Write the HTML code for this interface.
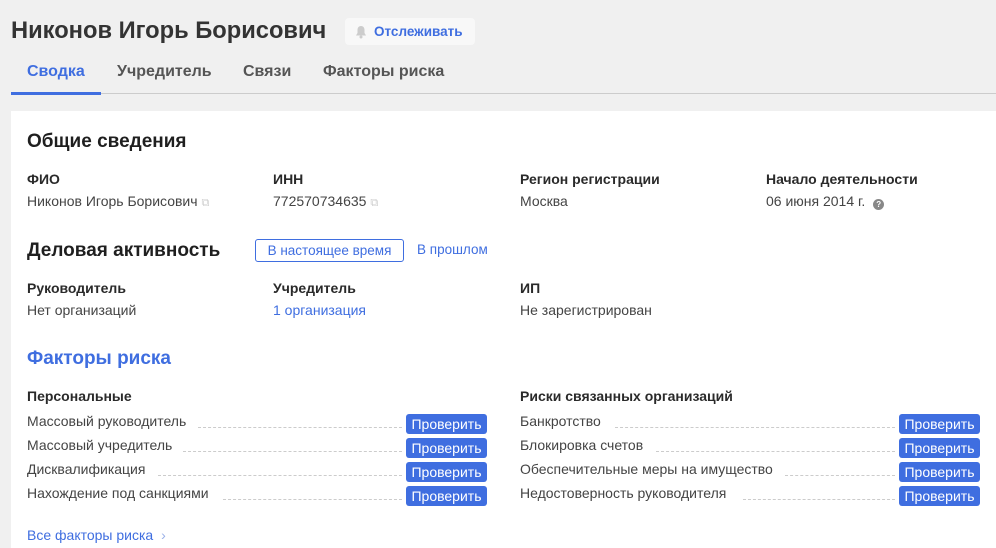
<!DOCTYPE html>
<html><head><meta charset="utf-8"><style>
*{margin:0;padding:0;box-sizing:border-box}
body{width:996px;height:548px;background:#f0f0f0;font-family:"Liberation Sans",sans-serif;color:#333;position:relative;overflow:hidden}
.a{position:absolute;white-space:nowrap}
h1{position:absolute;left:11px;top:18px;font-size:23.7px;font-weight:bold;color:#333}
.track{position:absolute;left:345px;top:18px;width:130px;height:27px;background:#f8f8f8;border-radius:4px;color:#3f6ee0;font-weight:bold;font-size:13.5px;line-height:27px;padding-left:29px}
.tab{position:absolute;top:63px;font-size:16px;font-weight:bold;color:#555}
.card{position:absolute;left:11px;top:111px;width:985px;height:437px;background:#fff}
.h2{font-size:19px;font-weight:bold;color:#1f1f1f}
.lb{font-size:14px;font-weight:bold;color:#2a2a2a}
.v{font-size:14px;color:#444}
.btn{position:absolute;width:81px;height:20px;background:#3f6ee0;color:#fff;font-size:14px;line-height:20px;text-align:center;border-radius:3px}
.dot{position:absolute;height:1px;border-top:1px dashed #ccc}
.blue{color:#3f6ee0}
</style></head><body>
<h1>Никонов Игорь Борисович</h1>
<div class="track"><svg style="position:absolute;left:10px;top:7px" width="12" height="14" viewBox="0 0 12 14"><path d="M6 1C3.5 1 2.5 3 2.5 5v3L1 10.5h10L9.5 8V5C9.5 3 8.5 1 6 1z" fill="#ccc"/><circle cx="6" cy="12" r="1.5" fill="#ccc"/></svg>Отслеживать</div>
<div class="tab" style="left:27px;color:#3f6ee0">Сводка</div>
<div class="tab" style="left:117px">Учредитель</div>
<div class="tab" style="left:243px">Связи</div>
<div class="tab" style="left:323px">Факторы риска</div>
<div class="a" style="left:11px;top:93px;width:985px;height:1px;background:#ccc"></div>
<div class="a" style="left:11px;top:92px;width:90px;height:3px;background:#3f6ee0"></div>
<div class="card"></div>
<div class="a h2" style="left:27px;top:131px">Общие сведения</div>
<div class="a lb" style="left:27px;top:171px">ФИО</div>
<div class="a lb" style="left:273px;top:171px">ИНН</div>
<div class="a lb" style="left:520px;top:171px">Регион регистрации</div>
<div class="a lb" style="left:766px;top:171px">Начало деятельности</div>
<div class="a v" style="left:27px;top:193px">Никонов Игорь Борисович <span style="color:#ccc;font-size:11px">⧉</span></div>
<div class="a v" style="left:273px;top:193px">772570734635 <span style="color:#ccc;font-size:11px">⧉</span></div>
<div class="a v" style="left:520px;top:193px">Москва</div>
<div class="a v" style="left:766px;top:193px">06 июня 2014 г. <span style="display:inline-block;width:11px;height:11px;border-radius:50%;background:#888;color:#fff;font-size:8px;line-height:11px;text-align:center;font-weight:bold;vertical-align:-1px;margin-left:4px">?</span></div>
<div class="a h2" style="left:27px;top:240px">Деловая активность</div>
<div class="a" style="left:255px;top:239px;width:149px;height:23px;border:1px solid #3f6ee0;border-radius:3px;color:#3f6ee0;font-size:13.5px;line-height:21px;text-align:center">В настоящее время</div>
<div class="a blue" style="left:417px;top:242px;font-size:13.5px">В прошлом</div>
<div class="a lb" style="left:27px;top:280px">Руководитель</div>
<div class="a lb" style="left:273px;top:280px">Учредитель</div>
<div class="a lb" style="left:520px;top:280px">ИП</div>
<div class="a v" style="left:27px;top:302px">Нет организаций</div>
<div class="a v blue" style="left:273px;top:302px">1 организация</div>
<div class="a v" style="left:520px;top:302px">Не зарегистрирован</div>
<div class="a h2 blue" style="left:27px;top:348px">Факторы риска</div>
<div class="a lb" style="left:27px;top:388px">Персональные</div>
<div class="a lb" style="left:520px;top:388px">Риски связанных организаций</div>

<div class="a v" style="left:27px;top:413px">Массовый руководитель</div><div class="dot" style="left:198px;top:427px;width:204px"></div><div class="btn" style="left:406px;top:414px">Проверить</div>
<div class="a v" style="left:27px;top:437px">Массовый учредитель</div><div class="dot" style="left:183px;top:451px;width:219px"></div><div class="btn" style="left:406px;top:438px">Проверить</div>
<div class="a v" style="left:27px;top:461px">Дисквалификация</div><div class="dot" style="left:158px;top:475px;width:244px"></div><div class="btn" style="left:406px;top:462px">Проверить</div>
<div class="a v" style="left:27px;top:485px">Нахождение под санкциями</div><div class="dot" style="left:223px;top:499px;width:179px"></div><div class="btn" style="left:406px;top:486px">Проверить</div>

<div class="a v" style="left:520px;top:413px">Банкротство</div><div class="dot" style="left:615px;top:427px;width:280px"></div><div class="btn" style="left:899px;top:414px">Проверить</div>
<div class="a v" style="left:520px;top:437px">Блокировка счетов</div><div class="dot" style="left:656px;top:451px;width:239px"></div><div class="btn" style="left:899px;top:438px">Проверить</div>
<div class="a v" style="left:520px;top:461px">Обеспечительные меры на имущество</div><div class="dot" style="left:785px;top:475px;width:110px"></div><div class="btn" style="left:899px;top:462px">Проверить</div>
<div class="a v" style="left:520px;top:485px">Недостоверность руководителя</div><div class="dot" style="left:743px;top:499px;width:152px"></div><div class="btn" style="left:899px;top:486px">Проверить</div>

<div class="a blue" style="left:27px;top:527px;font-size:14px">Все факторы риска <span style="color:#9ab0e8;margin-left:4px">›</span></div>
</body></html>
